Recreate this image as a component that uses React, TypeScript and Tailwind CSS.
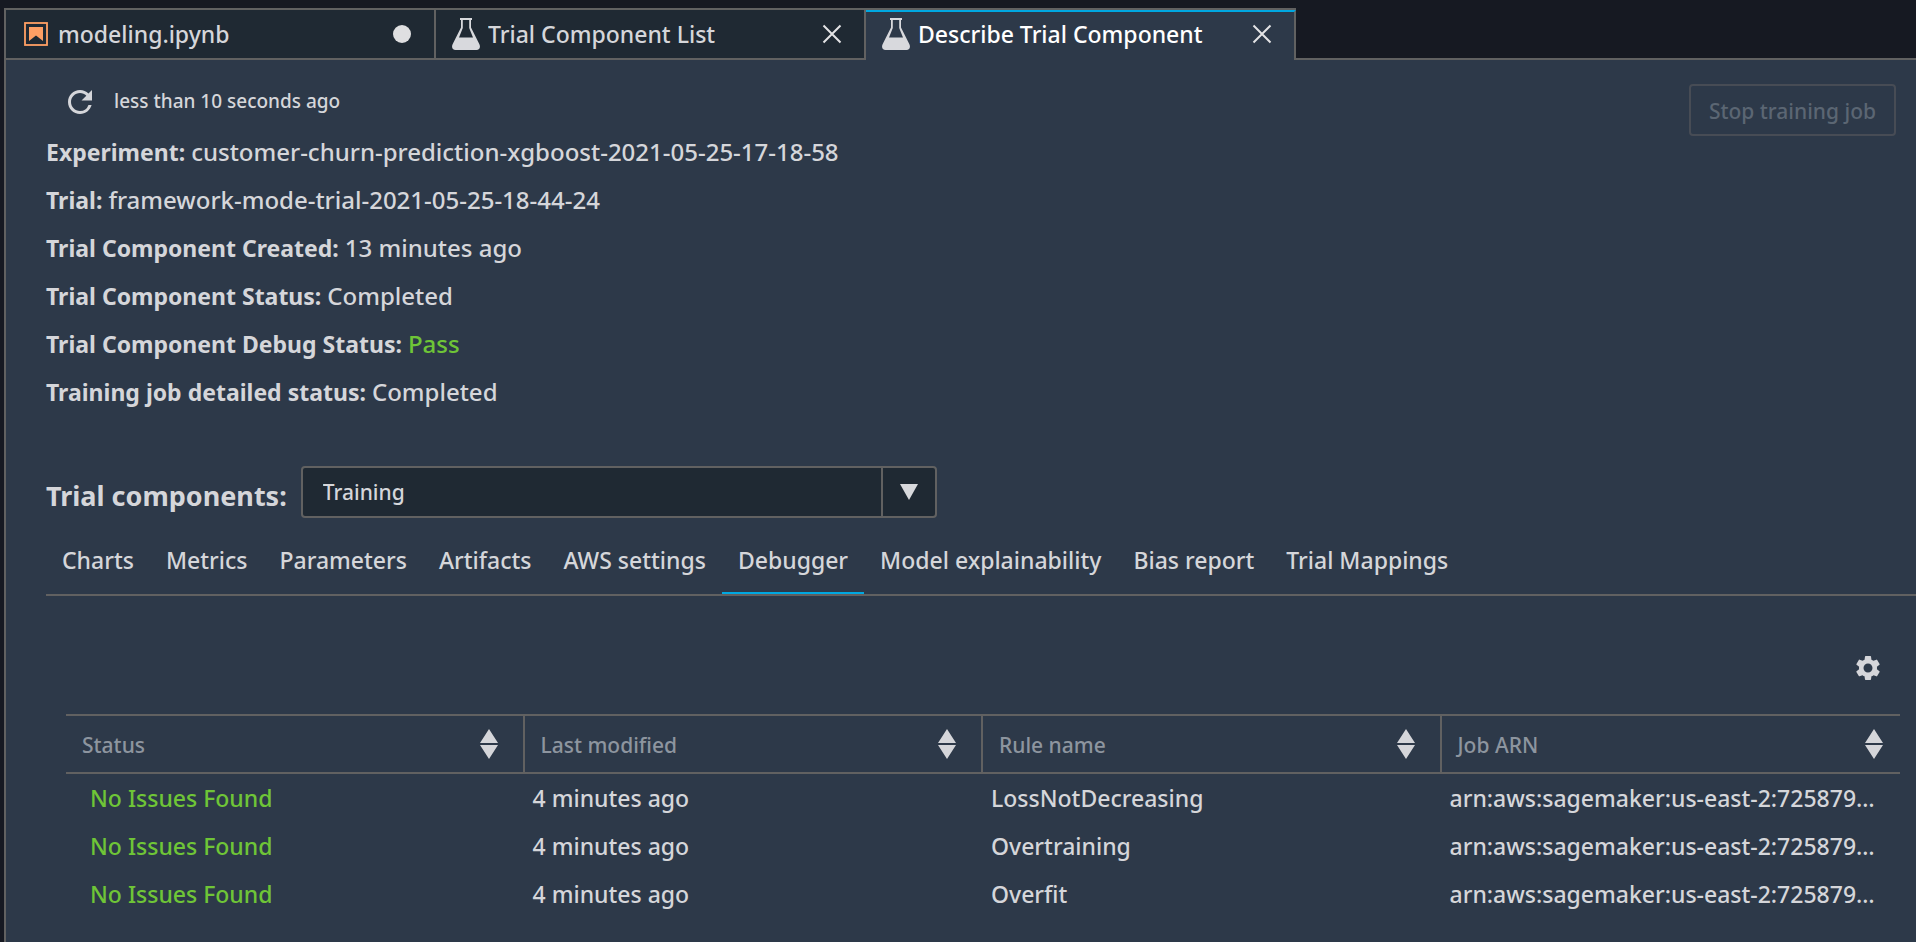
import { useState } from "react";
import { MdRefresh, MdSettings } from "react-icons/md";

function NotebookIcon() {
  return (
    <svg className="size-6 shrink-0" viewBox="0 0 24 24" aria-hidden="true">
      <rect x="1" y="1" width="22" height="22" fill="none" stroke="#ff9f64" strokeWidth="1.8" />
      <path d="M5 5H19V19L12 13.5L5 19Z" fill="#ff9f64" />
    </svg>
  );
}

function FlaskIcon() {
  return (
    <svg className="h-8 w-7 shrink-0" viewBox="0 0 28 32" aria-hidden="true">
      <path
        d="M8 0H20V2H19V9.5L27.4 26.2C28.8 29.4 27.4 32 24.5 32H3.5C.6 32-.8 29.4.6 26.2L9 9.5V2H8ZM10.8 2V10L7 19.5H21L17.2 10V2Z"
        fill="#d8d9dd"
        fillRule="evenodd"
      />
    </svg>
  );
}

function CloseIcon() {
  return (
    <svg className="size-5" viewBox="0 0 20 20" aria-hidden="true">
      <path d="M1.5 1.5L18.5 18.5M18.5 1.5L1.5 18.5" fill="none" stroke="#e4e4e6" strokeWidth="2" />
    </svg>
  );
}

function SortIcon() {
  return (
    <svg className="h-[30px] w-[18px] shrink-0" viewBox="0 0 18 30" aria-hidden="true">
      <path d="M9 0L18 14H0ZM0 16H18L9 30Z" fill="#d5d6da" />
    </svg>
  );
}

const docTabs = [
  { title: "modeling.ipynb", kind: "notebook", active: false },
  { title: "Trial Component List", kind: "flask", active: false },
  { title: "Describe Trial Component", kind: "flask", active: true },
];

const details = [
  { label: "Experiment:", value: "customer-churn-prediction-xgboost-2021-05-25-17-18-58" },
  { label: "Trial:", value: "framework-mode-trial-2021-05-25-18-44-24" },
  { label: "Trial Component Created:", value: "13 minutes ago" },
  { label: "Trial Component Status:", value: "Completed" },
  { label: "Trial Component Debug Status:", value: "Pass", pass: true },
  { label: "Training job detailed status:", value: "Completed" },
];

const sections = [
  "Charts",
  "Metrics",
  "Parameters",
  "Artifacts",
  "AWS settings",
  "Debugger",
  "Model explainability",
  "Bias report",
  "Trial Mappings",
];

const columns = ["Status", "Last modified", "Rule name", "Job ARN"];

const rules = ["LossNotDecreasing", "Overtraining", "Overfit"];

export default function App() {
  const [section, setSection] = useState("Debugger");

  return (
    <div className="flex min-h-screen flex-col bg-[#161922] pt-2 pl-1 font-['Noto_Sans',sans-serif] font-medium text-[#d5d6da]">
      <div className="flex">
        <div className="flex border-t-2 border-l-2 border-[#616161]" role="tablist" aria-label="Open documents">
          {docTabs.map((tab) => (
            <div
              key={tab.title}
              className={
                tab.active
                  ? "flex h-[50px] w-[430px] items-center border-t-2 border-r-2 border-t-[#00a8e1] border-r-[#616161] bg-[#2d3949] pr-[22px] pb-1 pl-4 text-white"
                  : "flex h-[50px] w-[430px] items-center border-r-2 border-b-2 border-[#616161] bg-[#1f2933] pr-[22px] pl-4"
              }
            >
              <button
                type="button"
                role="tab"
                aria-selected={tab.active}
                className="flex min-w-0 flex-1 items-center gap-2 text-left text-[23px] leading-8"
              >
                {tab.kind === "notebook" ? (
                  <span className="flex w-7 justify-center">
                    <NotebookIcon />
                  </span>
                ) : (
                  <FlaskIcon />
                )}
                <span className="truncate">{tab.title}</span>
              </button>
              <button type="button" aria-label={"Close " + tab.title} className="flex size-5 items-center justify-center">
                {tab.kind === "notebook" ? <span className="size-[18px] rounded-full bg-[#dfdfe1]" /> : <CloseIcon />}
              </button>
            </div>
          ))}
        </div>
        <div className="flex-1 border-b-2 border-[#616161]" />
      </div>

      <main className="flex-1 border-l-2 border-[#616161] bg-[#2d3949] pl-10">
        <div className="flex items-start justify-between pt-6 pr-5">
          <div className="flex items-center gap-4 pl-4 text-[19px] leading-8">
            <button type="button" aria-label="Refresh">
              <MdRefresh className="size-9" />
            </button>
            <span className="pb-[2px]">less than 10 seconds ago</span>
          </div>
          <button
            type="button"
            disabled
            className="h-[52px] rounded border-2 border-[#474c55] px-[18px] pt-[2px] text-[21px] leading-8 text-[#5b6673]"
          >
            Stop training job
          </button>
        </div>

        <dl className="-mt-2 leading-[48px]">
          {details.map((item) => (
            <div key={item.label} className="flex h-12 items-baseline gap-[6px]">
              <dt className="text-[23px] font-bold">{item.label}</dt>
              <dd className={item.pass ? "text-[24px] text-[#6fc537]" : "text-[24px]"}>{item.value}</dd>
            </div>
          ))}
        </dl>

        <div className="mt-[50px] flex items-center gap-[14px]">
          <label htmlFor="component" className="pt-2 text-[27px] leading-10 font-bold">
            Trial components:
          </label>
          <div className="grid w-[636px] rounded border-2 border-[#616161] bg-[#1f2933]">
            <select
              id="component"
              className="col-start-1 row-start-1 h-12 appearance-none bg-transparent px-5 pt-[2px] text-[21px] font-medium"
            >
              <option>Training</option>
            </select>
            <span className="pointer-events-none col-start-1 row-start-1 flex w-[54px] items-center justify-center justify-self-end border-l-2 border-[#616161]">
              <svg className="h-4 w-[18px]" viewBox="0 0 18 16" aria-hidden="true">
                <path d="M0 0H18L9 16Z" fill="#d8d9dd" />
              </svg>
            </span>
          </div>
        </div>

        <nav className="mt-4 flex border-b-2 border-[#616161]" aria-label="Component details">
          {sections.map((name) => (
            <button
              key={name}
              type="button"
              onClick={() => setSection(name)}
              className={
                name === section
                  ? "h-[60px] border-b-2 border-[#00a8e1] px-4 pb-[6px] text-[23px] whitespace-nowrap"
                  : "h-[60px] border-b-2 border-transparent px-4 pb-[6px] text-[23px] whitespace-nowrap"
              }
            >
              {name}
            </button>
          ))}
        </nav>

        <section className="pt-[57px] pr-4 pl-5">
          <div className="flex justify-end pr-[17px]">
            <button type="button" aria-label="Table settings">
              <MdSettings className="size-[30px]" />
            </button>
          </div>
          <table className="mt-[31px] w-full table-fixed border-separate border-spacing-0 text-left">
            <thead>
              <tr>
                {columns.map((name) => (
                  <th
                    key={name}
                    scope="col"
                    className="h-[60px] border-y-2 border-r-2 border-[#616161] pr-[25px] pl-4 text-[21px] font-medium text-[#8d959f] last:border-r-0 last:pr-[17px]"
                  >
                    <button type="button" className="flex w-full items-center justify-between leading-7">
                      <span className="pt-[2px]">{name}</span>
                      <SortIcon />
                    </button>
                  </th>
                ))}
              </tr>
            </thead>
            <tbody className="text-[23px]">
              {rules.map((rule) => (
                <tr key={rule}>
                  <td className="h-12 pl-6 text-[#6fc537]">No Issues Found</td>
                  <td className="h-12 pl-2">4 minutes ago</td>
                  <td className="h-12 pl-2">{rule}</td>
                  <td className="h-12 pl-2 whitespace-nowrap">arn:aws:sagemaker:us-east-2:725879…</td>
                </tr>
              ))}
            </tbody>
          </table>
        </section>
      </main>
    </div>
  );
}
